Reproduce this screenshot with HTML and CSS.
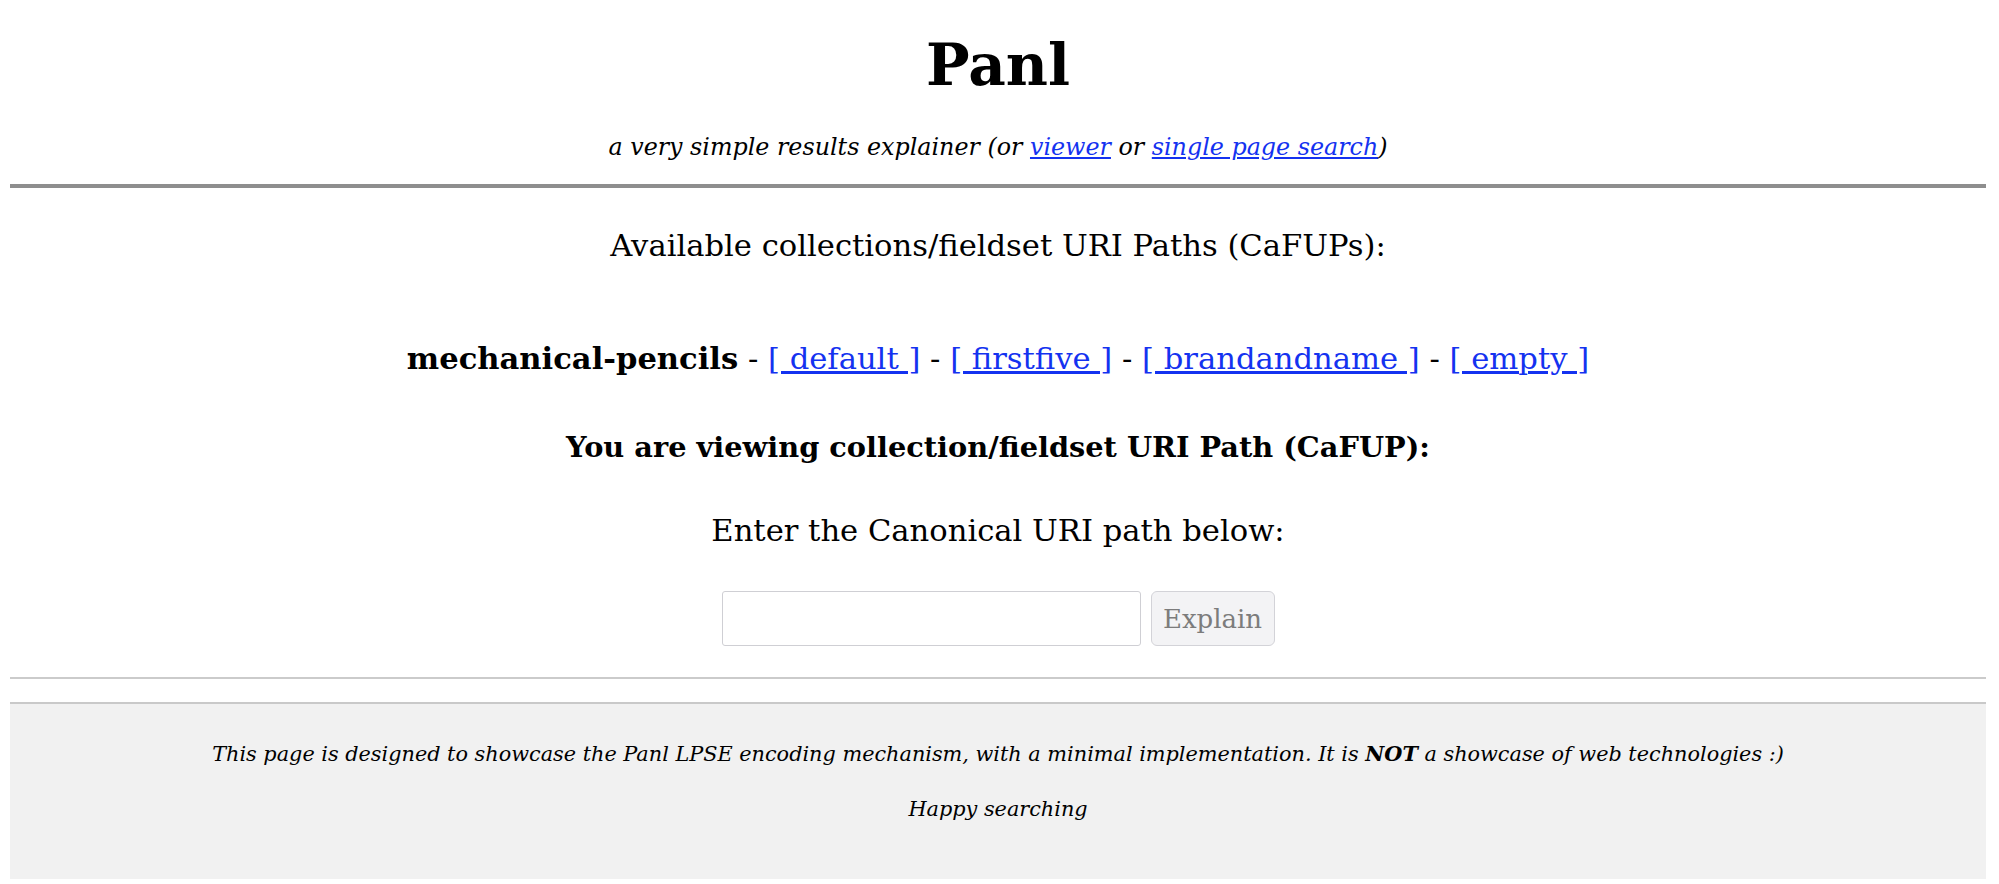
FILE: index.html
```html
<!DOCTYPE html>
<html lang="en">
<head>
<meta charset="utf-8">
<title>Panl</title>
<link rel="stylesheet" href="styles.css">
</head>
<body>
<header class="masthead">
  <h1 class="title">Panl</h1>
  <p class="tagline"><em>a very simple results explainer (or <a href="#">viewer</a> or <a href="#">single page search</a>)</em></p>
</header>
<hr class="rule-main">
<main class="content">
  <p class="intro">Available collections/fieldset URI Paths (CaFUPs):</p>
  <p class="collections"><strong>mechanical-pencils</strong> - <a href="#">[ default ]</a> - <a href="#">[ firstfive ]</a> - <a href="#">[ brandandname ]</a> - <a href="#">[ empty ]</a></p>
  <p class="viewing"><strong>You are viewing collection/fieldset URI Path (CaFUP):</strong></p>
  <p class="enter">Enter the Canonical URI path below:</p>
  <form class="explain-form">
    <input class="uri-input" type="text">
    <button class="explain-btn" type="button">Explain</button>
  </form>
</main>
<hr class="rule-light">
<footer class="footer">
  <p class="footer-line"><em>This page is designed to showcase the Panl LPSE encoding mechanism, with a minimal implementation. It is <strong>NOT</strong> a showcase of web technologies :)</em></p>
  <p class="footer-line"><em>Happy searching</em></p>
</footer>
</body>
</html>
```
FILE: styles.css
```css
html, body {
  background: #ffffff;
}
body {
  margin: 0 13px 0 10px;
  font-family: "DejaVu Serif", "Liberation Serif", serif;
  color: #000;
  text-align: center;
}
a {
  color: #1432f0;
  text-decoration: underline;
}
.masthead {
  display: flex;
  flex-direction: column;
  align-items: center;
}
.title {
  margin: 25px 0 0;
  font-size: 58px;
  line-height: 80px;
  font-weight: bold;
}
.tagline {
  margin: 27px 0 0;
  font-size: 23.8px;
  line-height: 30px;
}
.rule-main {
  margin: 22px 0 0;
  border: none;
  height: 4px;
  background: #8e8e8e;
}
.content {
  display: flex;
  flex-direction: column;
  align-items: center;
}
.content p {
  margin: 0;
  font-size: 30.6px;
  line-height: 40px;
}
.content .intro { margin-top: 38px; }
.content .collections { margin-top: 72px; }
.content .viewing { margin-top: 48px; font-size: 28.8px; }
.content .enter { margin-top: 44px; }
.explain-form {
  margin-top: 40px;
  display: flex;
  gap: 10px;
  height: 55px;
}
.uri-input {
  box-sizing: border-box;
  width: 419px;
  height: 55px;
  border: 1.5px solid #cfcfd4;
  border-radius: 3px;
  background: #fff;
  margin: 0;
}
.explain-btn {
  box-sizing: border-box;
  width: 124px;
  height: 55px;
  margin: 0;
  border: 1.5px solid #d3d3d8;
  border-radius: 6px;
  background: #f3f3f5;
  color: #7c7c7c;
  font-family: "DejaVu Serif", "Liberation Serif", serif;
  font-size: 26px;
  padding: 0;
}
.rule-light {
  margin: 31px 0 0;
  border: none;
  height: 2px;
  background: #cbcbcb;
}
.footer {
  margin-top: 23px;
  border-top: 2px solid #c9c9c9;
  background: #f1f1f1;
  padding: 35px 0 55px;
  display: flex;
  flex-direction: column;
  gap: 25px;
}
.footer-line {
  margin: 0;
  font-size: 20.8px;
  line-height: 30px;
}
```
